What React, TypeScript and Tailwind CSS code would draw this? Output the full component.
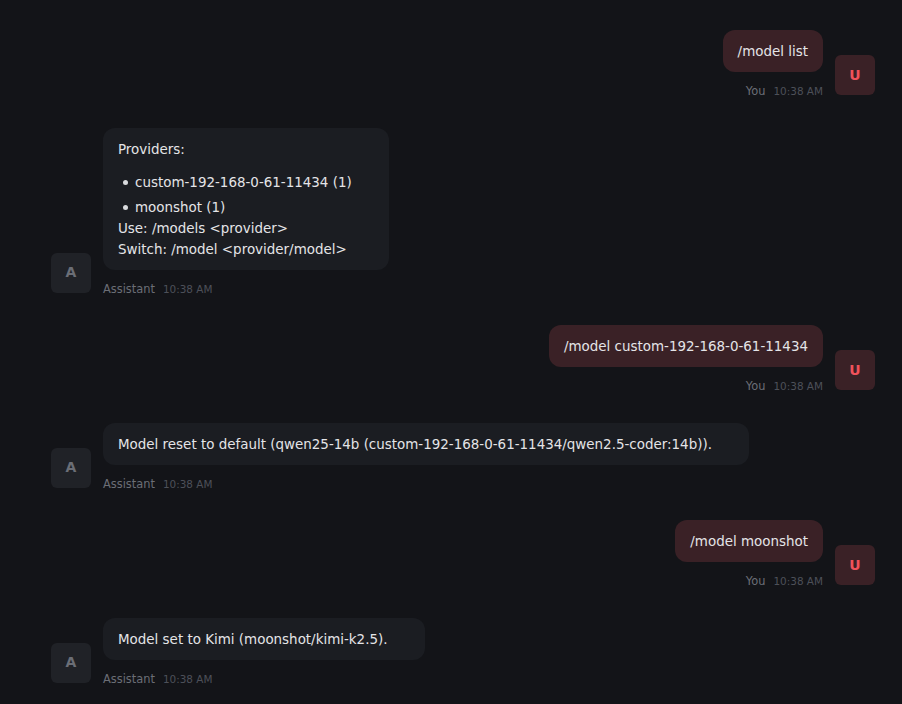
import React from "react";

type Msg = {
  role: "user" | "assistant";
  text?: string;
  body?: React.ReactNode;
};

const font = { fontFamily: '"DejaVu Sans", Verdana, sans-serif' };

function ProvidersBody() {
  return (
    <div>
      <p>Providers:</p>
      <ul className="mt-3 flex flex-col gap-1">
        {["custom-192-168-0-61-11434 (1)", "moonshot (1)"].map((item) => (
          <li key={item} className="flex items-center pl-[5px]">
            <span className="w-[5px] h-[5px] rounded-full bg-[#d9dadd] mr-[7px]" />
            {item}
          </li>
        ))}
      </ul>
      <p>Use: /models &lt;provider&gt;</p>
      <p>Switch: /model &lt;provider/model&gt;</p>
    </div>
  );
}

const messages: Msg[] = [
  { role: "user", text: "/model list" },
  { role: "assistant", body: <ProvidersBody /> },
  { role: "user", text: "/model custom-192-168-0-61-11434" },
  {
    role: "assistant",
    text: "Model reset to default (qwen25-14b (custom-192-168-0-61-11434/qwen2.5-coder:14b)).",
  },
  { role: "user", text: "/model moonshot" },
  { role: "assistant", text: "Model set to Kimi (moonshot/kimi-k2.5)." },
];

function Meta({ who }: { who: string }) {
  return (
    <div className="mt-[11px] flex items-end gap-2 h-4">
      <span className="text-[11.4px] leading-4 text-[#6b6e76]">{who}</span>
      <span className="text-[10.45px] leading-4 text-[#4d5059]">10:38 AM</span>
    </div>
  );
}

function Avatar({ role }: { role: "user" | "assistant" }) {
  const user = role === "user";
  return (
    <div
      className={`mb-[4px] w-10 h-10 shrink-0 rounded-md flex items-center justify-center text-[14px] font-bold ${
        user ? "bg-[#3a2126] text-[#f0525b]" : "bg-[#202227] text-[#6b6e76]"
      }`}
    >
      {user ? "U" : "A"}
    </div>
  );
}

function Row({ msg }: { msg: Msg }) {
  if (msg.role === "user") {
    return (
      <div className="flex justify-end items-end gap-3">
        <div className="flex flex-col items-end">
          <div className="rounded-xl bg-[#3a2126] px-[15px] pt-[11px] pb-[10px] text-[13.45px] leading-[21px] text-[#e4e4e7]">
            {msg.text}
          </div>
          <Meta who="You" />
        </div>
        <Avatar role="user" />
      </div>
    );
  }
  return (
    <div className="flex items-end gap-3">
      <Avatar role="assistant" />
      <div className="flex flex-col items-start">
        <div className="rounded-xl bg-[#1b1d22] pl-[15px] pr-[37px] pt-[11px] pb-[10px] text-[13.45px] leading-[21px] text-[#e4e4e7]">
          {msg.body ?? msg.text}
        </div>
        <Meta who="Assistant" />
      </div>
    </div>
  );
}

export default function App() {
  return (
    <div
      className="min-h-[704px] bg-[#131418] pl-[51px] pr-[27px] pt-[30px] pb-6 flex flex-col gap-[28.5px]"
      style={font}
    >
      {messages.map((m, i) => (
        <Row key={i} msg={m} />
      ))}
    </div>
  );
}
